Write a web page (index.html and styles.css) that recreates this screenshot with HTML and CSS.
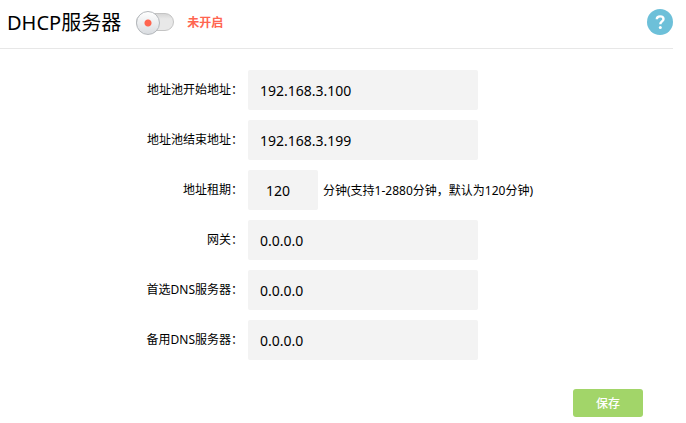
FILE: index.html
```
<!DOCTYPE html>
<html lang="zh-CN">
<head>
    <meta charset="UTF-8">
    <meta name="viewport" content="width=device-width, initial-scale=1.0">
    <title>DHCP服务器</title>
    <link rel="stylesheet" href="styles.css">
</head>
<body>
    <header class="head">
        <h1 class="title">DHCP服务器</h1>
        <input type="checkbox" class="switch" id="dhcp-switch">
        <label class="state" for="dhcp-switch">未开启</label>
        <button type="button" class="help" aria-label="帮助">
            <svg width="26" height="26" viewBox="0 0 26 26">
                <circle cx="13" cy="13" r="13" fill="#6dc0d9"/>
                <path d="M9.8 10.2C9.8 8.3 11.2 7.4 13.1 7.4C15.1 7.4 16.5 8.4 16.5 10C16.5 12.4 13.3 12.4 13.3 15.2" fill="none" stroke="#fff" stroke-width="2.4"/>
                <circle cx="13.3" cy="18.5" r="1.5" fill="#fff"/>
            </svg>
        </button>
    </header>

    <form class="form">
        <div class="row">
            <label class="name" for="pool-start">地址池开始地址：</label>
            <input type="text" class="text" id="pool-start" value="192.168.3.100">
        </div>
        <div class="row">
            <label class="name" for="pool-end">地址池结束地址：</label>
            <input type="text" class="text" id="pool-end" value="192.168.3.199">
        </div>
        <div class="row">
            <label class="name" for="lease">地址租期：</label>
            <input type="text" class="text short" id="lease" value="120">
            <span class="note">分钟(支持1-2880分钟，默认为120分钟)</span>
        </div>
        <div class="row">
            <label class="name" for="gateway">网关：</label>
            <input type="text" class="text" id="gateway" value="0.0.0.0">
        </div>
        <div class="row">
            <label class="name" for="dns1">首选DNS服务器：</label>
            <input type="text" class="text" id="dns1" value="0.0.0.0">
        </div>
        <div class="row">
            <label class="name" for="dns2">备用DNS服务器：</label>
            <input type="text" class="text" id="dns2" value="0.0.0.0">
        </div>
        <div class="foot">
            <button type="button" class="save">保存</button>
        </div>
    </form>
</body>
</html>
```

FILE: styles.css
```
* {
    box-sizing: border-box;
}
body {
    margin: 0 13px 0 0;
    background: #fff;
    color: #000;
    font: 12px "Noto Sans", "Noto Sans CJK SC", sans-serif;
}
input, button {
    margin: 0;
    border: 0;
    font-family: inherit;
    color: inherit;
}

/* title bar */
.head {
    display: flex;
    align-items: center;
    height: 49px;
    padding: 0 0 4px 7px;
    border-bottom: 1px solid #e7e7e7;
}
.title {
    margin: 0 15px 0 0;
    padding-top: 2px;
    font-size: 20px;
    line-height: 28px;
    font-weight: normal;
}
.switch {
    appearance: none;
    position: relative;
    width: 38px;
    height: 18px;
    border: 1px solid #c4c4c4;
    border-radius: 9px;
    background: linear-gradient(#d6d6d6, #e8e8e8 5px);
}
.switch::before {
    content: "";
    position: absolute;
    top: -3px;
    left: -1px;
    width: 22px;
    height: 22px;
    border: 1px solid #b4b8bc;
    border-radius: 50%;
    background: radial-gradient(circle, #ff6550 3px, transparent 4px), linear-gradient(#fff, #d9dce0);
}
.switch:checked::before {
    left: 15px;
}
.state {
    margin-left: 13px;
    font-weight: bold;
    color: #ff6550;
}
.help {
    margin-left: auto;
    padding: 0;
    background: none;
    cursor: pointer;
}
.help svg {
    display: block;
}

/* settings */
.form {
    display: flex;
    flex-direction: column;
    gap: 10px;
    padding-top: 21px;
}
.row {
    display: flex;
    align-items: center;
}
.name {
    width: 243px;
    margin-right: 5px;
    padding-bottom: 2px;
    text-align: right;
}
.text {
    width: 230px;
    height: 40px;
    padding: 0 12px;
    border-radius: 2px;
    background: #f3f3f3;
    font-size: 14px;
}
.short {
    width: 70px;
    padding: 0 18px;
}
.note {
    margin-left: 5px;
}
.foot {
    display: flex;
    justify-content: flex-end;
    padding: 19px 30px 0 0;
}
.save {
    width: 70px;
    height: 28px;
    border-radius: 3px;
    background: #a2d569;
    color: #fff;
    font-size: 12px;
    font-weight: 500;
    cursor: pointer;
}
```
